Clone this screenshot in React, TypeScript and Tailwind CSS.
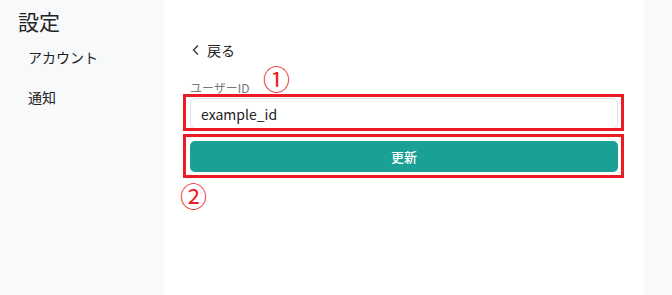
export default function App() {
  return (
    <div
      className="relative flex h-[295px] w-[672px] overflow-hidden bg-[#f8f9fb] text-[#222]"
      style={{ fontFamily: '"Noto Sans CJK JP", "Noto Sans", sans-serif' }}
    >
      <aside className="w-[164px] shrink-0 bg-[#f8f9fb] pl-[18px] pt-[7px]">
        <h1 className="text-[21px] leading-[28px] text-[#222]">設定</h1>
        <nav className="mt-[12px] flex flex-col gap-[20px] pl-[10px] text-[14px] leading-[20px]">
          <a className="block">アカウント</a>
          <a className="block">通知</a>
        </nav>
      </aside>

      <main className="w-[480px] shrink-0 bg-white px-[26px] pt-[40px]">
        <a className="flex items-center gap-[6px] text-[14px] leading-[20px]">
          <svg width="10" height="12" viewBox="0 0 10 12" fill="none" className="ml-[1px]">
            <path d="M7 1.5 2.5 6 7 10.5" stroke="#333" strokeWidth="1.3" />
          </svg>
          戻る
        </a>
        <label className="mt-[20px] block text-[12px] leading-[16px] text-[#777]">ユーザーID</label>
        <input
          defaultValue="example_id"
          className="mt-[2px] block h-[31px] w-full rounded-[5px] border border-[#dcdfe6] px-[10px] text-[14px] text-[#222] outline-none"
        />
        <button className="mt-[12px] block h-[31px] w-full rounded-[5px] bg-[#1aa094] text-[13px] font-medium text-white">
          更新
        </button>
      </main>

      <div className="flex-1 bg-[#f8f9fb]" />

      {/* annotation overlay */}
      <div className="pointer-events-none absolute left-[183px] top-[94px] h-[37px] w-[441px] border-[3px] border-[#ec1c24]" />
      <div className="pointer-events-none absolute left-[183px] top-[134px] h-[44px] w-[441px] border-[3px] border-[#ec1c24]" />
      <span className="pointer-events-none absolute left-[263px] top-[63px] text-[27px] leading-[32px] text-[#ec1c24]">①</span>
      <span className="pointer-events-none absolute left-[180px] top-[180px] text-[27px] leading-[32px] text-[#ec1c24]">②</span>
    </div>
  );
}
